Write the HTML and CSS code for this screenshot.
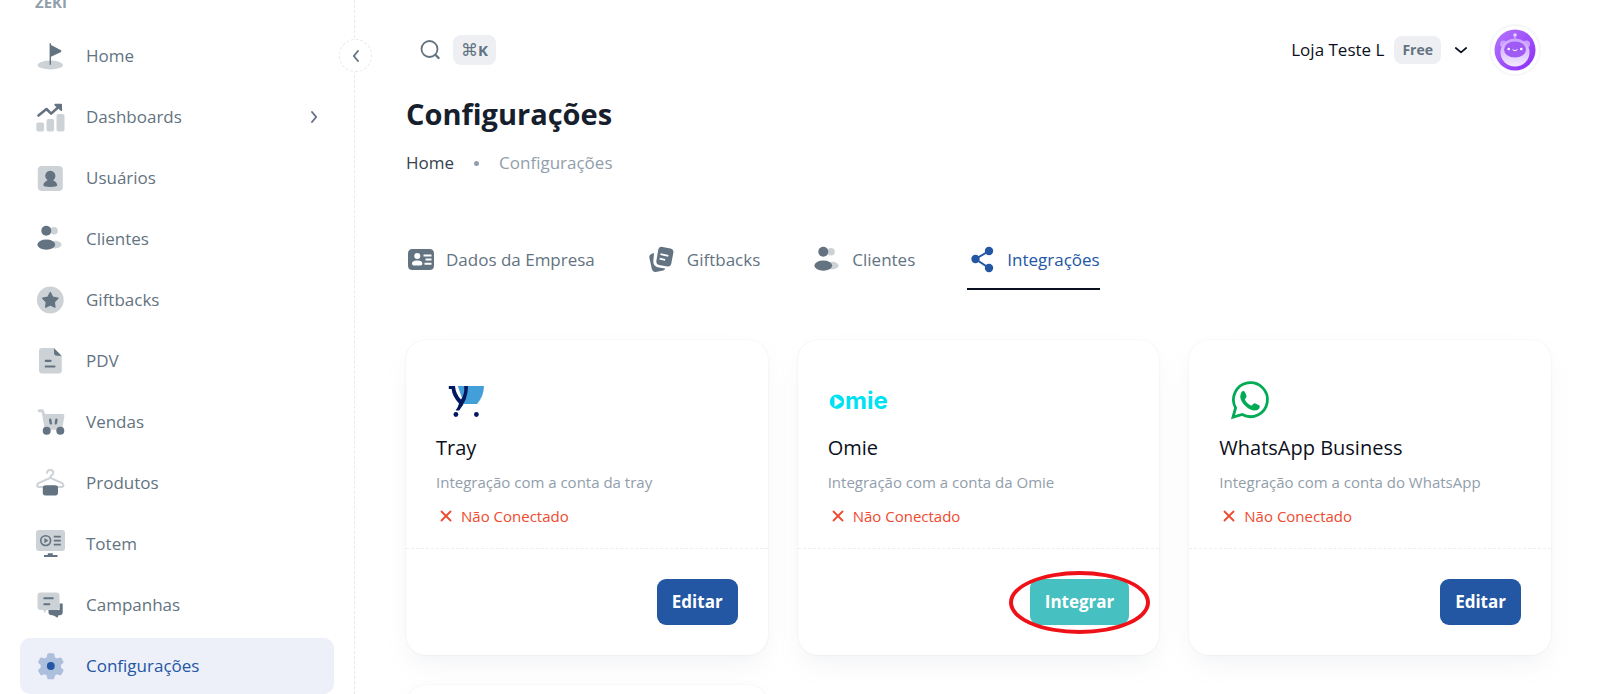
FILE: index.html
```html
<!DOCTYPE html>
<html lang="pt-BR">
  <head>
    <meta charset="utf-8">
    <title>Configurações</title>
    <meta name="viewport" content="width=device-width, initial-scale=1.0">
    <link rel="stylesheet" href="styles.css">
  </head>
  <body>
    <svg class="sprite" aria-hidden="true">
      <symbol id="icon-clientes" viewBox="0 0 30 30">
        <circle class="light" cx="19" cy="6.7" r="3.8"/>
        <ellipse class="light" cx="20.2" cy="20.6" rx="6.4" ry="3.8"/>
        <circle cx="11.3" cy="6.7" r="5"/>
        <ellipse cx="11.3" cy="20.6" rx="8.9" ry="5.1"/>
      </symbol>
      <symbol id="icon-x" viewBox="0 0 20 20">
        <path d="M5.5 5.5l9 9M14.5 5.5l-9 9" fill="none" stroke="currentColor" stroke-width="1.8" stroke-linecap="round"/>
      </symbol>
    </svg>

    <aside class="sidebar">
      <h2 class="sidebar-title">ZEKI</h2>
      <button class="collapse" type="button" aria-label="Recolher menu">
        <svg width="16" height="16" viewBox="0 0 16 16"><path d="M10 3L5.8 8l4.2 5" fill="none" stroke="currentColor" stroke-width="1.9" stroke-linecap="round" stroke-linejoin="round"/></svg>
      </button>
      <nav class="menu">
        <a href="#" class="menu-item">
          <svg class="icon" viewBox="0 0 30 30">
            <ellipse class="light" cx="15.3" cy="24" rx="12.7" ry="4.4"/>
            <path d="M14.6 2.2H16V4l9.6 5c1 .5 1 1.7 0 2.2L16 15.800v8h-1.400z"/>
          </svg>
          <span>Home</span>
        </a>
        <a href="#" class="menu-item">
          <svg class="icon" viewBox="0 0 30 30">
            <rect class="light" x="1.3" y="20.5" width="7.8" height="9" rx="2"/>
            <rect class="light" x="11.5" y="17" width="7.6" height="12.5" rx="2"/>
            <rect class="light" x="21.5" y="12" width="8" height="17.5" rx="2"/>
            <path d="M3.5 13.500L11.500 7l4.600 4.600L23.500 5" fill="none" stroke="currentColor" stroke-width="2.600" stroke-linecap="round" stroke-linejoin="round"/>
            <path d="M20.200 1.800h5.800q1 0 1 1v5.600q0 1-1 .6l-6.400-5.600q-.8-1 .6-1.600z"/>
          </svg>
          <span>Dashboards</span>
          <svg class="arrow" width="16" height="16" viewBox="0 0 16 16"><path d="M6 3l4.200 5L6 13" fill="none" stroke="currentColor" stroke-width="1.9" stroke-linecap="round" stroke-linejoin="round"/></svg>
        </a>
        <a href="#" class="menu-item">
          <svg class="icon" viewBox="0 0 30 30">
            <rect class="light" x="2.8" y="3" width="25" height="25" rx="4"/>
            <path d="M10.2 13a5.100 5.100 0 1 1 7.800 4.300c2.600 1 4.200 3 4.200 5.200q0 1.400-6.900 1.400t-6.900-1.400c0-2.200 1.600-4.200 4.200-5.200a5.100 5.100 0 0 1-2.400-4.300z"/>
          </svg>
          <span>Usuários</span>
        </a>
        <a href="#" class="menu-item">
          <svg class="icon"><use href="#icon-clientes"/></svg>
          <span>Clientes</span>
        </a>
        <a href="#" class="menu-item">
          <svg class="icon" viewBox="0 0 30 30">
            <circle class="light" cx="15.3" cy="15" r="13.4"/>
            <path d="M15.3 7.600l2.400 4.700 5.200.9-3.700 3.700.7 5.200-4.600-2.300-4.600 2.300.7-5.200-3.700-3.700 5.200-.9z" stroke="currentColor" stroke-width="1.4" stroke-linejoin="round"/>
          </svg>
          <span>Giftbacks</span>
        </a>
        <a href="#" class="menu-item">
          <svg class="icon" viewBox="0 0 30 30">
            <path class="light" d="M7 2h12l7.800 8v14.500q0 3-3 3H7q-3 0-3-3V5q0-3 3-3z"/>
            <path d="M19 2.200l7.600 7.600h-4.200q-3.400-.2-3.400-3.400zM10.800 13.800h4.700a1 1 0 0 1 0 2.200h-4.700a1 1 0 0 1 0-2.200zM10.800 19.400h8.700a1 1 0 0 1 0 2.200h-8.700a1 1 0 0 1 0-2.200z"/>
          </svg>
          <span>PDV</span>
        </a>
        <a href="#" class="menu-item">
          <svg class="icon" viewBox="0 0 30 30">
            <path class="light" d="M4.200 2.200h2.700q1.700 0 2.200 1.700l.9 3.200h17.600q2 0 1.800 2l-2 12q-.3 1.600-2 1.600H11.600q-1.800 0-2.100-1.600L6.700 5.200H4.200a1.500 1.500 0 0 1 0-3z"/>
            <path d="M15.200 12.800l.6 3.600M21.400 12.800l-.6 3.600" fill="none" stroke="currentColor" stroke-width="2.400" stroke-linecap="round"/>
            <circle cx="11.7" cy="23.7" r="4"/><circle cx="25.3" cy="23.7" r="4"/>
          </svg>
          <span>Vendas</span>
        </a>
        <a href="#" class="menu-item">
          <svg class="icon" viewBox="0 0 30 30">
            <path class="light-line" d="M12 4.800q.3-2.800 3.300-2.800t3 2.700q0 1.600-1.600 2.500-1.400.8-1.400 2.600M8 19H4q-2-.3-1.800-2 .2-1.200 1.300-1.800L15.300 9.800l11.800 5.400q1.300.7 1.300 1.800.1 1.600-1.800 2H23"/>
            <rect x="7.8" y="17.2" width="15.2" height="10.2" rx="2.6"/>
          </svg>
          <span>Produtos</span>
        </a>
        <a href="#" class="menu-item">
          <svg class="icon" viewBox="0 0 30 30">
            <rect class="light" x="1" y="1" width="29" height="21" rx="3"/>
            <circle cx="10.7" cy="11.6" r="4.900" fill="none" stroke="currentColor" stroke-width="1.600"/>
            <path d="M9.400 9v5.200l4-2.600zM18.800 6.800h7v1.600h-7zM18.800 10.800h7v1.600h-7zM18.800 14.800h7v1.600h-7zM12.800 24.200h5v1.700h4.700V28H9v-2.100h3.800z"/>
          </svg>
          <span>Totem</span>
        </a>
        <a href="#" class="menu-item">
          <svg class="icon" viewBox="0 0 30 30">
            <path d="M27.700 13.500v9q0 2.500-2.600 2.700h-1.700q-.3 2.800-1.500 2.200-2.300-2-4.400-2.200-3.800 0-4-2.500V20h11V13.500z"/>
            <path class="cover" d="M5.800 2.500h15.500q3.200 0 3.200 3v11q0 3.500-3 3.500h-10L9.800 23l-1.600-3H5.500q-3-.2-3-3.200V5.500q0-3 3.300-3z"/>
            <path class="light" d="M5.800 2.500h15.500q3.200 0 3.200 3v11q0 3.500-3 3.500h-10L9.800 23l-1.600-3H5.500q-3-.2-3-3.200V5.500q0-3 3.300-3z"/>
            <path d="M9.300 8.300h8.500M9.300 14.200h5" fill="none" stroke="currentColor" stroke-width="2.100" stroke-linecap="round"/>
          </svg>
          <span>Campanhas</span>
        </a>
        <a href="#" class="menu-item active" aria-current="page">
          <svg class="icon" viewBox="0 0 30 30">
            <path class="light" d="M13.500 2.300h4.600q1 0 1.200 1l.6 2.900 2.100 1.200 2.900-.9q1-.3 1.500.6l2 3.500q.5.900-.3 1.500l-2.200 1.900v2.600l2.200 1.900q.8.600.3 1.500l-2 3.600q-.5.900-1.500.6l-2.900-.9-2.100 1.200-.6 2.800q-.2 1-1.200 1h-4.600q-1 0-1.200-1l-.6-2.800-2.100-1.200-2.900.9q-1 .3-1.500-.6l-2-3.600q-.5-.9.300-1.500l2.200-1.900V14l-2.200-1.900q-.8-.6-.3-1.500l2-3.500q.5-.9 1.500-.6l2.900.9 2.100-1.200.6-2.900q.2-1 1.200-1z"/>
            <circle cx="15.8" cy="15" r="3.900"/>
          </svg>
          <span>Configurações</span>
        </a>
      </nav>
    </aside>

    <main class="content">
      <header class="topbar">
        <button class="search" type="button" aria-label="Buscar">
          <svg width="22" height="22" viewBox="0 0 22 22"><circle cx="9.500" cy="10" r="8" fill="none" stroke="currentColor" stroke-width="1.800"/><path d="M15.600 16l3 3" stroke="currentColor" stroke-width="2.400" stroke-linecap="round"/></svg>
          <kbd class="tag"><span class="cmd">⌘</span>K</kbd>
        </button>
        <div class="account">
          <button class="store" type="button">
            <span>Loja Teste L</span>
            <span class="tag">Free</span>
            <svg width="20" height="20" viewBox="0 0 20 20"><path d="M4.800 8l5.200 4.400L15.200 8" fill="none" stroke="currentColor" stroke-width="1.700" stroke-linecap="round" stroke-linejoin="round"/></svg>
          </button>
          <button class="avatar" type="button" aria-label="Perfil">
            <svg width="42" height="42" viewBox="0 0 42 42">
              <defs>
                <linearGradient id="roxo" x1="0" y1="0" x2="1" y2="1"><stop offset="0" stop-color="#b478ff"/><stop offset="1" stop-color="#8a2cf5"/></linearGradient>
                <linearGradient id="corpo" x1="0" y1="0" x2="0" y2="1"><stop offset="0" stop-color="#c9a0ff"/><stop offset="1" stop-color="#f3e9ff"/></linearGradient>
              </defs>
              <circle cx="21" cy="21" r="20.500" fill="url(#roxo)"/>
              <path d="M21 6v5" stroke="#d9bcff" stroke-width="1"/>
              <circle cx="21" cy="6" r="1.800" fill="#e6d3ff"/>
              <circle cx="9.500" cy="15" r="3.500" fill="#c9a0ff"/><circle cx="32.500" cy="15" r="3.500" fill="#c9a0ff"/>
              <ellipse cx="21" cy="23.500" rx="14.500" ry="14" fill="url(#corpo)"/>
              <ellipse cx="21" cy="20.500" rx="11" ry="8" fill="#a05bf5"/>
              <circle cx="14.700" cy="20" r="1.300" fill="#fff"/><circle cx="27.300" cy="20" r="1.300" fill="#fff"/>
              <path d="M18.600 20.600q2.400 2.400 4.800 0" fill="none" stroke="#fff" stroke-width="1"/>
            </svg>
          </button>
        </div>
      </header>

      <h1>Configurações</h1>
      <nav class="breadcrumb">
        <a href="#">Home</a>
        <i class="dot"></i>
        <span>Configurações</span>
      </nav>

      <nav class="tabs">
        <a href="#" class="tab">
          <svg class="icon" viewBox="0 0 30 30">
            <path fill-rule="evenodd" d="M6.500 4h17Q28 4 28 8.500v12q0 4.500-4.500 4.500h-17Q2 25 2 20.500v-12Q2 4 6.500 4zM11.300 8a3 3 0 1 0 0 6 3 3 0 1 0 0-6zM10.500 15.600q-4.500.4-4.500 3 0 1.900 1.800 1.900h6.800q1.800 0 1.800-1.900 0-2.600-4.500-3zM17.500 9.500v2h8v-2zM19.500 13.600v2h6v-2zM18.500 17.700v2h7v-2z"/>
          </svg>
          <span>Dados da Empresa</span>
        </a>
        <a href="#" class="tab">
          <svg class="icon" viewBox="0 0 30 30">
            <path d="M7 8Q2 9 2.300 12.500l2.600 11.800q.8 3 3.800 2.600l7.500-1.400q1.800-.5 2-2l-6.500-1q-6-1.200-5.300-7z"/>
            <path fill-rule="evenodd" d="M14.200 1.800l9.300 1.700q3.300.8 2.900 4l-2.200 11.400q-.8 2.900-3.800 2.600l-8.400-1.500q-3-.7-2.700-3.800l2-11.600q.6-2.900 2.900-2.800zM13.300 10l7.800 1.700.4-1.800-7.800-1.700zM12.400 14.500l5.500 1.200.4-1.800-5.500-1.200z"/>
          </svg>
          <span>Giftbacks</span>
        </a>
        <a href="#" class="tab">
          <svg class="icon"><use href="#icon-clientes"/></svg>
          <span>Clientes</span>
        </a>
        <a href="#" class="tab active" aria-current="page">
          <svg class="icon" viewBox="0 0 30 30">
            <path d="M22 6L8.500 14l13.500 9" fill="none" stroke="currentColor" stroke-width="2"/>
            <circle cx="22" cy="6" r="4.200"/><circle cx="8.500" cy="14" r="4.200"/><circle cx="22" cy="23" r="4.200"/>
          </svg>
          <span>Integrações</span>
        </a>
      </nav>

      <section class="cards">
        <article class="card">
          <div class="card-body">
            <svg class="logo" viewBox="0 0 60 60">
              <path d="M21.800 16H48q-.4 11-7 17.900H28z" fill="#429fd8"/>
              <path d="M12.800 16h6.200q.6 8 6 13.600Q29 24 28.200 16h3.800q.2 13-8.800 24.500h-3.600q2.600-3.500 3.400-7-6.600-7-7.400-14.500h-2.800z" fill="#00185f"/>
              <circle cx="19.900" cy="44.500" r="2.400" fill="#00185f"/><circle cx="40.400" cy="44.500" r="2.400" fill="#00185f"/>
            </svg>
            <h3>Tray</h3>
            <p class="desc">Integração com a conta da tray</p>
            <p class="status"><svg width="20" height="20"><use href="#icon-x"/></svg>Não Conectado</p>
          </div>
          <div class="card-footer">
            <button class="btn" type="button">Editar</button>
          </div>
        </article>

        <article class="card">
          <div class="card-body">
            <svg class="logo" viewBox="0 0 60 60">
              <path fill="#00e2f4" fill-rule="evenodd" d="M9 24.500a7.200 7.200 0 1 1 0 14.400 7.200 7.200 0 1 1 0-14.400zM6.500 26.500v10.200l7.500-5z"/>
              <text class="omie" x="17" y="39">mie</text>
            </svg>
            <h3>Omie</h3>
            <p class="desc">Integração com a conta da Omie</p>
            <p class="status"><svg width="20" height="20"><use href="#icon-x"/></svg>Não Conectado</p>
          </div>
          <div class="card-footer">
            <button class="btn btn-integrar" type="button">Integrar</button>
          </div>
        </article>

        <article class="card">
          <div class="card-body">
            <svg class="logo" viewBox="0 0 60 60">
              <path d="M14 47.200l2.600-9.300A17 17 0 1 1 23.200 44.500z" fill="none" stroke="#00ab55" stroke-width="2.800"/>
              <path d="M23.200 21.200q1.600-.6 2.600.6l1.700 4.200q.2.800-.5 1.700l-1.200 1.500q1.600 4 6.600 6.600l2.200-2.100q.8-.7 1.800-.3l3.700 1.800q.9.500.7 1.500-.8 3.700-4.800 3.900-4.200.2-9.300-4.300-5.300-5.100-5.500-9.900.1-3.600 2-5.200z" fill="#00ab55"/>
            </svg>
            <h3>WhatsApp Business</h3>
            <p class="desc">Integração com a conta do WhatsApp</p>
            <p class="status"><svg width="20" height="20"><use href="#icon-x"/></svg>Não Conectado</p>
          </div>
          <div class="card-footer">
            <button class="btn" type="button">Editar</button>
          </div>
        </article>

        <article class="card card-empty"></article>
      </section>
    </main>
  </body>
</html>
```

FILE: styles.css
```css
* {
  box-sizing: border-box;
}
body {
  margin: 0;
  display: flex;
  height: 100vh;
  overflow: hidden;
  background-color: #fff;
  color: #212b36;
  font-family: "Open Sans", "Noto Sans", sans-serif;
  font-size: 17px;
  line-height: 24px;
}
h1, h2, h3, p {
  margin: 0;
}
a {
  color: inherit;
  text-decoration: none;
}
button {
  padding: 0;
  border: 0;
  background: none;
  color: inherit;
  font: inherit;
  cursor: pointer;
}
svg {
  flex: none;
  fill: currentColor;
}
.sprite {
  position: absolute;
  width: 0;
  height: 0;
}
.icon {
  width: 30px;
  height: 30px;
}
.light {
  opacity: 0.32;
}
.light-line {
  fill: none;
  stroke: currentColor;
  stroke-width: 2;
  stroke-linecap: round;
  opacity: 0.32;
}
.cover {
  fill: #fff;
}

/* menu lateral */
.sidebar {
  position: relative;
  flex: none;
  width: 355px;
  padding: 0 20px;
  border-right: 1px dashed #e6e9ed;
}
.sidebar-title {
  margin-top: -8px;
  padding-left: 15px;
  color: #919eab;
  font-size: 15px;
  line-height: 20px;
}
.collapse {
  position: absolute;
  top: 39px;
  right: -18px;
  display: flex;
  align-items: center;
  justify-content: center;
  width: 33px;
  height: 33px;
  border: 1px dashed #e6e9ed;
  border-radius: 50%;
  background-color: #fff;
  color: #637381;
}
.menu {
  display: flex;
  flex-direction: column;
  gap: 5px;
  padding-top: 16px;
}
.menu-item {
  display: flex;
  align-items: center;
  gap: 21px;
  height: 56px;
  padding: 0 12px 0 15px;
  border-radius: 10px;
  color: #637381;
  font-weight: 500;
}
.menu-item.active {
  background-color: #edf0f8;
  color: #2356a3;
}
.arrow {
  margin-left: auto;
}

/* topo */
.content {
  flex: 1;
  min-width: 0;
  padding: 0 49px 0 51px;
}
.topbar {
  display: flex;
  align-items: center;
  justify-content: space-between;
  height: 92px;
  padding: 8px 10px 0 14px;
}
.search {
  display: flex;
  align-items: center;
  gap: 11px;
  color: #637381;
}
.tag {
  padding: 2px 8px;
  border-radius: 8px;
  background-color: #edeff2;
  color: #637381;
  font-family: "Open Sans", "DejaVu Sans", sans-serif;
  font-size: 14px;
  font-weight: 700;
}
kbd.tag {
  padding: 3px 8px;
  font-size: 15px;
}
.cmd {
  font-size: 17px;
  font-weight: 400;
}
.account, .store {
  display: flex;
  align-items: center;
}
.account {
  gap: 18px;
}
.store {
  gap: 10px;
  color: #0b1020;
}
.avatar {
  display: flex;
  padding: 3px;
  border: 2px solid #f6f7f8;
  border-radius: 50%;
}
h1 {
  color: #16202c;
  font-size: 29px;
  line-height: 44px;
}
.breadcrumb {
  display: flex;
  align-items: center;
  gap: 20px;
  padding-top: 15px;
  color: #919eab;
}
.breadcrumb a {
  color: #36414c;
}
.dot {
  width: 5px;
  height: 5px;
  border-radius: 50%;
  background-color: #919eab;
}

/* abas */
.tabs {
  display: flex;
  gap: 52px;
  margin-top: 57px;
}
.tab {
  display: flex;
  align-items: center;
  gap: 10px;
  height: 58px;
  border-bottom: 2px solid transparent;
  color: #637381;
  font-weight: 500;
}
.tab.active {
  border-color: #0b1020;
  color: #2356a3;
}

/* cards */
.cards {
  display: grid;
  grid-template-columns: repeat(3, 1fr);
  gap: 30px;
  margin-top: 50px;
}
.card {
  border-radius: 20px;
  background-color: #fff;
  box-shadow: 0 0 2px rgba(145, 158, 171, 0.2), 0 12px 24px -4px rgba(145, 158, 171, 0.12);
}
.card-empty {
  min-height: 315px;
}
.card-body {
  padding: 30px 30px 20px;
}
.logo {
  display: block;
  width: 60px;
  height: 60px;
}
.omie {
  fill: #00e2f4;
  font-family: Inter, sans-serif;
  font-size: 24px;
  font-weight: 700;
}
.card h3 {
  margin-top: 4px;
  color: #0b1020;
  font-size: 20px;
  font-weight: 400;
  line-height: 28px;
}
.desc {
  margin-top: 8px;
  color: #919eab;
  font-size: 15px;
}
.status {
  display: flex;
  align-items: center;
  gap: 5px;
  margin-top: 10px;
  color: #ee4a2f;
  font-size: 15px;
}
.card-footer {
  display: flex;
  justify-content: flex-end;
  padding: 30px;
  border-top: 1px dashed #eceef1;
}
.btn {
  position: relative;
  height: 46px;
  padding: 0 15px;
  border-radius: 9px;
  background-color: #2356a3;
  color: #fff;
  font-weight: 700;
}
.btn-integrar {
  background-color: #46c0c0;
}
/* destaque em volta do botão */
.btn-integrar::after {
  content: "";
  position: absolute;
  inset: -8px -21px -9px -21px;
  border: 4px solid #ee1118;
  border-radius: 50%;
}
```
